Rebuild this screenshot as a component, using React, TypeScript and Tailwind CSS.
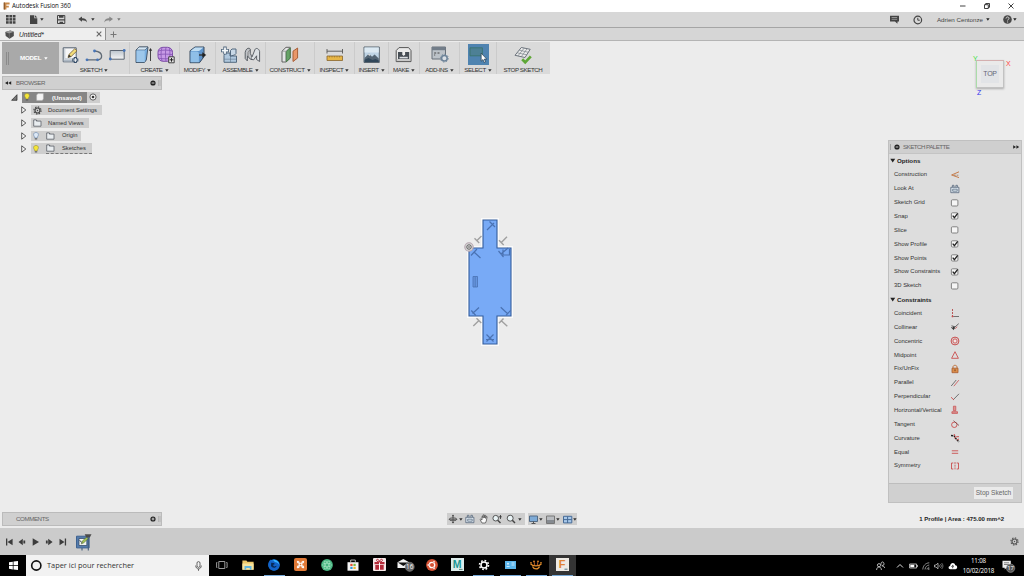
import type { ReactNode } from "react";

const sans = "font-['Liberation_Sans',Arial,sans-serif]";
const ui = "font-['Open_Sans','Noto_Sans',sans-serif]";

type IconProps = { w: number; h: number; children: ReactNode; className?: string };
function Icon({ w, h, children, className = "" }: IconProps) {
  return (
    <svg width={w} height={h} viewBox={`0 0 ${w} ${h}`} fill="none" className={`shrink-0 overflow-visible ${className}`}>
      {children}
    </svg>
  );
}

function Caret({ className = "text-[#333]" }: { className?: string }) {
  return (
    <Icon w={4} h={3} className={className}>
      <path d="M0.2 0.2h3.4L1.9 2.7z" fill="currentColor" />
    </Icon>
  );
}

/* ---------- window chrome ---------- */

function TitleBar() {
  return (
    <div className="flex h-3 shrink-0 items-center bg-white pl-[3px]">
      <Icon w={7} h={8}>
        <path d="M1 0.5h5.6v2H3.4v1.3h2.4v1.7H3.4v2H1z" fill="#c98a4b" />
        <path d="M0.6 0.5h1.3v7H0.6z" fill="#8d5a2b" />
      </Icon>
      <span className={`${ui} ml-[2px] flex-1 whitespace-nowrap text-[6.2px] leading-3 tracking-[-0.06px] text-[#111]`}>Autodesk Fusion 360</span>
      <div className="flex items-center gap-[18px] pr-[10px] text-[#111]">
        <Icon w={6} h={6}><path d="M0 3h5.5" stroke="currentColor" strokeWidth="0.8" /></Icon>
        <Icon w={6} h={6}>
          <path d="M0.5 1.7h3.8v3.8H0.5zM1.7 1.7V0.5h3.8v3.8H4.3" stroke="currentColor" strokeWidth="0.8" />
        </Icon>
        <Icon w={6} h={6}><path d="M0.5 0.5l5 5M5.5 0.5l-5 5" stroke="currentColor" strokeWidth="0.8" /></Icon>
      </div>
    </div>
  );
}

function QuickBar() {
  return (
    <div className="flex h-[16px] shrink-0 items-center border-b border-[#a5a5a5] bg-[#d7d7d7] pl-[6px] text-[#444]">
      <Icon w={10} h={9}>
        {[0, 3.4, 6.8].map((x) => [0, 3.1, 6.2].map((y) => <rect key={`${x}-${y}`} x={x} y={y} width="2.7" height="2.5" fill="#444" />))}
      </Icon>
      <Icon w={8} h={9} className="ml-[14px]">
        <path d="M0 0.3h4.3v3h3V9H0z" fill="#444" /><path d="M5 0.3l2.3 2.3H5z" fill="#444" />
      </Icon>
      <Caret className="ml-[2px] text-[#333]" />
      <Icon w={9} h={9} className="ml-[13px]">
        <path d="M0.5 0.5h7.3v8H0.5z" stroke="#444" /><path d="M2 0.5h4.5v2.2H2zM1 4.3h7v1.2H1zM2.5 6.8h3.6v2H2.5z" fill="#444" />
      </Icon>
      <Icon w={10} h={8} className="ml-[12px]">
        <path d="M0.3 3L4 0.4v1.8c3 0 4.8 1 5 4.4C8.2 5 6.8 4.3 4 4.3v1.5z" fill="#444" />
      </Icon>
      <Caret className="ml-[3px] text-[#333]" />
      <Icon w={10} h={8} className="ml-[9px]">
        <path d="M9 3L5.3 0.4v1.8C2.4 2.2 0.6 3.2 0.3 6.6 1.2 5 2.6 4.3 5.3 4.3v1.5z" fill="#888" />
      </Icon>
      <Caret className="ml-[3px] text-[#777]" />
      <div className="flex-1" />
      <Icon w={9} h={9} className="mr-[2px]">
        <path d="M0 0.8h9v5.6H7.6L7.4 8.8 5 6.4H0z" fill="#444" />
        <path d="M1.6 2.5h5.6M1.6 4.3h5.6" stroke="#b5b5b5" strokeWidth="0.7" />
      </Icon>
      <Icon w={10} h={10} className="ml-[12px]">
        <circle cx="4.8" cy="5" r="3.8" stroke="#444" strokeWidth="1.2" /><path d="M4.8 2.8V5.2H6.8" stroke="#444" />
      </Icon>
      <span className={`${sans} ml-[14px] whitespace-nowrap text-[6.2px] text-[#444]`}>Adrien Centonze</span>
      <Caret className="ml-[3px] text-[#222]" />
      <Icon w={9} h={9} className="ml-[13px]">
        <circle cx="4.5" cy="4.5" r="4.3" fill="#484848" />
        <path d="M3 3.5c0-2 3-2 3-.1 0 1.1-1.4 1-1.4 2.1M4.6 6.5v1" stroke="#ddd" strokeWidth="1" />
      </Icon>
      <Caret className="ml-[1px] mr-[7px] text-[#222]" />
    </div>
  );
}

function TabBar() {
  return (
    <div className="flex h-[13px] shrink-0 border-b border-[#b4b4b4] bg-[#d6d6d6]">
      <div className="flex w-[106px] items-center border-r border-[#909090] bg-[#eeeeee] pl-[5px]">
        <Icon w={9} h={9}>
          <path d="M0.3 2L5.4 0.6 8.8 1.8V6L4.6 8.7 0.7 6z" fill="#4d4d4d" /><path d="M0.3 2L5.4 0.6 8.8 1.8 4.2 3.4z" fill="#999" />
          <path d="M4.3 3.4v5" stroke="#888" strokeWidth="0.5" />
        </Icon>
        <span className={`${sans} ml-[5px] flex-1 pt-px text-[6.6px] italic leading-3 text-[#222]`}>Untitled*</span>
        <Icon w={6} h={6} className="mr-[3px]"><path d="M0.7 0.7l4.6 4.6M5.3 0.7L0.7 5.3" stroke="#666" strokeWidth="1.1" /></Icon>
      </div>
      <Icon w={7} h={7} className="ml-[4px] mt-[3px]"><path d="M3.5 0.5v6M0.5 3.5h6" stroke="#777" strokeWidth="1" /></Icon>
    </div>
  );
}

/* ---------- toolbar ---------- */

const outline = "#394a5e";

function SketchIcon() {
  return (
    <Icon w={17} h={18}>
      <path d="M1.2 1.8h13v14h-13z" fill="#f6f6f6" stroke="#53606f" /><path d="M1.7 13.5h12v2h-12z" fill="#aeb9c5" />
      <path d="M2.8 2.8v10h10" stroke="#a5b3c2" strokeWidth=".7" />
      <path d="M6 11.5L7 8.4 12.8 2.7 15 4.8 9.1 10.6z" fill="#f4dd79" stroke="#705b30" strokeWidth=".8" />
      <path d="M6 11.5l1-3.1L9.1 10.6z" fill="#333" />
      <path d="M13.3 11v6M10.3 14h6" stroke="#354c67" strokeWidth="3" /><path d="M13.3 12v4M11.3 14h4" stroke="#fff" />
    </Icon>
  );
}
function ArcIcon() {
  return (
    <Icon w={18} h={14}>
      <path d="M2 11.8h11c3-.2 3.7-2 3.6-4-.1-3-2.1-4.2-6.6-4.8" stroke="#606a75" strokeWidth="1.3" />
      {[[2, 11.8], [12.5, 11.8], [9.5, 3]].map(([x, y]) => <circle key={x} cx={x} cy={y} r="1.4" fill="#4775b8" />)}
    </Icon>
  );
}
function RectIcon() {
  return (
    <Icon w={17} h={12}>
      <defs><linearGradient id="rg" x2="0" y2="1"><stop stopColor="#bcc5cd" /><stop offset="1" stopColor="#f5f5f5" /></linearGradient></defs>
      <path d="M1.2 1.5h14v8.7h-14z" fill="url(#rg)" stroke="#5b6470" />
      <circle cx="1.3" cy="10" r="1.4" fill="#4775b8" /><circle cx="15.2" cy="1.5" r="1.4" fill="#4775b8" />
    </Icon>
  );
}
function ExtrudeIcon() {
  return (
    <Icon w={17} h={18}>
      <path d="M1 4L4 1h9l-1.7 13L9.4 16.5H1z" fill="#79aee0" stroke={outline} strokeWidth=".9" />
      <path d="M1 4L4 1h9L10 4z" fill="#d3e6f4" stroke={outline} strokeWidth=".6" /><path d="M1.5 4.5h8.2v11.6H1.5z" fill="#9dc7eb" />
      <path d="M15.5 3v12" stroke="#333" strokeWidth=".9" /><path d="M13.8 4.7l1.7-2.6 1.7 2.6z" fill="#333" />
    </Icon>
  );
}
function FormIcon() {
  return (
    <Icon w={18} h={18}>
      <rect x="1" y="1.3" width="14.5" height="14" rx="5" fill="#c79ae6" stroke="#7d4fa8" />
      <path d="M5 1.5c-1.3 4-1.3 9 0 13.5M9 1.3c-.7 4-.7 9 0 14M12.5 2c.6 4 .6 9 0 13M1 5c4-1.2 10-1.2 14.5 0M1 8.7c4-.8 10-.8 14.5 0M1.2 12.2c4 .8 10 .8 14 0" stroke="#8353b2" strokeWidth=".8" />
      <path d="M11.7 10.8h5.5v6h-5.5z" fill="#e4e4e4" stroke="#333" strokeWidth=".9" /><path d="M14.5 12v3.7M12.7 13.8h3.7" stroke="#222" />
    </Icon>
  );
}
function ModifyIcon() {
  return (
    <Icon w={18} h={18}>
      <path d="M1 4.8L6 1h9v9.7l-4.5 6H1z" fill="#5e94cc" stroke={outline} />
      <path d="M1.5 5L6 1.5h8.5L10 5z" fill="#c0ddf2" /><path d="M1.6 5.4h5.8c2.3 0 2.5 1 2.5 3.2v7.6H1.6z" fill="#8fbfe8" />
      <path d="M10 9h4" stroke="#333" strokeWidth="1.4" /><path d="M13.3 6.3L17.3 9l-4 2.7z" fill="#222" />
    </Icon>
  );
}
function NewComponentIcon() {
  return (
    <Icon w={18} h={18}>
      <path d="M4 9.5L5.5 7H10v3h6.5v6.3H4z" fill="#b0c8de" stroke="#53697f" /><path d="M10.5 10V4.5L12 3h4v4.5L14.5 9z" fill="#c8d8e6" stroke="#53697f" />
      <path d="M4.3 13.2h6.2v3M10.5 10v3.2h5.7" stroke="#53697f" strokeWidth=".5" />
      <path d="M5 .6v8M1 4.6h8" stroke="#53697f" strokeWidth="3.4" /><path d="M5 1.5v6.2M1.9 4.6h6.2" stroke="#f5f9fc" strokeWidth="1.8" />
    </Icon>
  );
}
function JointIcon() {
  return (
    <Icon w={17} h={18}>
      <path d="M1.2 12.5V6.3C1.8 2.5 5 1 6.3 3.2v4.2L8 11v2.7l-2-.8-2.5-3-.2 5z" fill="#c0c3c7" stroke="#50565c" strokeWidth=".9" />
      <path d="M8 11l3-7.5c1-2 4-1 4.6 2v10l-3-2V9.8L9.7 13.8 8 13.5" fill="#dce0e4" stroke="#50565c" strokeWidth=".9" />
      <path d="M6 3.6L4 6.5v4" stroke="#777" strokeWidth=".8" />
    </Icon>
  );
}
function ConstructIcon() {
  return (
    <Icon w={18} h={18}>
      <path d="M1 5.2L5 1.3h4.2V12L5 16H1z" fill="#e4e5e6" stroke="#555" strokeWidth=".9" /><path d="M1.3 5.2h3.5V16M4.8 5.2L9 1.4" stroke="#888" strokeWidth=".7" />
      <path d="M5.3 5.7L9.2 2v10.2l-3.9 3.6z" fill="#66a266" stroke="#3d7440" strokeWidth=".8" />
      <path d="M12 5.2L16.6 2v10L12 15.5z" fill="#e99768" stroke="#a95e37" />
    </Icon>
  );
}
function InspectIcon() {
  return (
    <Icon w={18} h={14}>
      <path d="M1 1v4.5M16.5 1v4.5M1 3.2h15.5" stroke="#555" strokeWidth=".9" />
      <path d="M1 8h15.5v4.5H1z" fill="#e7b646" stroke="#89662d" strokeWidth=".8" /><path d="M3.5 8v1.5M6 8v1.5M8.5 8v1.5M11 8v1.5M13.5 8v1.5" stroke="#89662d" strokeWidth=".5" />
    </Icon>
  );
}
function InsertIcon() {
  return (
    <Icon w={18} h={18}>
      <path d="M1 1h15.3v15.5H1z" fill="#bfd4e5" stroke="#5b6670" />
      <path d="M1.5 1.5h14.3v5H1.5z" fill="#dce9f2" /><path d="M1.5 12L6 7.5l3 3.2 2.6-2.2 4.2 4V16H1.5z" fill="#536473" />
      <path d="M1.5 13.8l4-1.8 4 2 3-1 3.3 1.5V16H1.5z" fill="#31475a" /><path d="M5 8.7l1-1.2 1.5 1.7-1 .5z" fill="#eee" />
    </Icon>
  );
}
function MakeIcon() {
  return (
    <Icon w={18} h={18}>
      <path d="M1.2 4.6L4 1.6h9.6L16 4.6v11H1.2z" fill="#e9e9e9" stroke="#555" />
      <path d="M3 6h11.2v7H3z" fill="#454c53" /><path d="M7.3 5.5h2.8v3L8.7 10 7.3 8.5z" fill="#eee" />
      <path d="M4.5 10.8h8.3v1.6H4.5z" fill="#d9dde1" /><path d="M1.5 14h14" stroke="#aaa" />
    </Icon>
  );
}
function AddInsIcon() {
  return (
    <Icon w={18} h={17}>
      <path d="M1 1h13.5v12H1z" fill="#bcc2c8" stroke="#69717a" /><path d="M1 1h13.5v3.2H1z" fill="#727d89" />
      <path d="M3.2 7h2M6.5 7h2M3.2 9h1" stroke="#444" />
      <circle cx="13.4" cy="12.2" r="2.8" fill="#d9dfe5" stroke="#6c8399" strokeWidth="1.5" />
      <circle cx="13.4" cy="12.2" r="3.9" stroke="#6c8399" strokeWidth=".9" strokeDasharray="1.5 1.5" />
    </Icon>
  );
}
function SelectIcon() {
  return (
    <Icon w={21} h={21}>
      <path d="M0 0h21v21H0z" fill="#4f83b0" /><path d="M2 3.8h12.4v8H2z" fill="#4d8095" stroke="#377168" strokeWidth=".8" />
      <path d="M13.2 9.2v8l1.8-1.7 1.2 3 1.3-.6-1.2-2.8h2.4z" fill="#fff" stroke="#182b3d" strokeWidth=".6" />
    </Icon>
  );
}
function StopSketchIcon() {
  return (
    <Icon w={18} h={18}>
      <path d="M1 9.3L7.3 1.5l8.9 1.8L11 11.5z" fill="#ececec" stroke="#606872" strokeWidth=".9" />
      <path d="M3.1 6.8l9.8 2M5.2 4.1l9.2 2.2M3.8 10L10.3 2M7.3 10.7l5.8-8" stroke="#7a828a" strokeWidth=".7" />
      <path d="M8.2 13.3l3 3 5.6-6" stroke="#5ea736" strokeWidth="2.7" />
    </Icon>
  );
}

type Group = { label: string; width: string; gap?: string; caret?: boolean; icons: ReactNode };
const groups: Group[] = [
  { label: "SKETCH", width: "w-[71px]", gap: "gap-[6px]", icons: <><SketchIcon /><ArcIcon /><RectIcon /></> },
  { label: "CREATE", width: "w-[50px]", gap: "gap-[5px]", icons: <><ExtrudeIcon /><FormIcon /></> },
  { label: "MODIFY", width: "w-[36px]", icons: <ModifyIcon /> },
  { label: "ASSEMBLE", width: "w-[50px]", gap: "gap-[6px]", icons: <><NewComponentIcon /><JointIcon /></> },
  { label: "CONSTRUCT", width: "w-[49px]", icons: <ConstructIcon /> },
  { label: "INSPECT", width: "w-[40px]", icons: <InspectIcon /> },
  { label: "INSERT", width: "w-[34px]", icons: <InsertIcon /> },
  { label: "MAKE", width: "w-[31px]", icons: <MakeIcon /> },
  { label: "ADD-INS", width: "w-[40px]", icons: <AddInsIcon /> },
  { label: "SELECT", width: "w-[37px]", icons: <SelectIcon /> },
  { label: "STOP SKETCH", width: "w-[53px]", caret: false, icons: <StopSketchIcon /> },
];

function Toolbar() {
  return (
    <div className="ml-[2px] mt-px flex h-[32px] w-[548px] shrink-0 bg-[#dadada]">
      <div className="flex w-[57px] shrink-0 items-center bg-[#a9a9a9] pl-[4px]">
        <div className="h-[13px] w-[3px] border-x border-[#8b8b8b]" />
        <span className={`${sans} ml-[11px] text-[6.2px] font-bold tracking-[-0.2px] text-white`}>MODEL</span>
        <Caret className="ml-[3px] text-white" />
      </div>
      {groups.map((g, i) => (
        <div key={g.label} className={`flex shrink-0 flex-col border-r ${i < 10 ? "border-[#cbcbcb]" : "border-transparent"} ${g.width}`}>
          <div className={`flex h-[25px] items-center justify-center ${g.gap ?? ""}`}>{g.icons}</div>
          <div className="flex h-[6px] items-center justify-center gap-[1px]">
            <span className={`${sans} whitespace-nowrap text-[6.2px] leading-[6px] tracking-[-0.42px] text-[#333]`}>{g.label}</span>
            {g.caret !== false && <Caret className="ml-px text-[#333]" />}
          </div>
        </div>
      ))}
    </div>
  );
}

/* ---------- browser ---------- */

function PanelBar({ title, collapse, plus }: { title: string; collapse?: boolean; plus?: boolean }) {
  return (
    <div className="flex h-[14px] w-[160px] shrink-0 items-center border border-[#bbb] bg-[#d0d0d0] pl-[2px]">
      <div className="flex w-[11px]">
        {collapse && <Icon w={7} h={4}><path d="M3 0.2v3.6L0 2zM6.2 0.2v3.6L3.2 2z" fill="#222" /></Icon>}
      </div>
      <span className={`${sans} flex-1 text-[6.2px] tracking-[-0.42px] text-[#666]`}>{title}</span>
      <Icon w={6} h={6}>
        <circle cx="3" cy="3" r="2.6" fill="#222" />
        <path d={plus ? "M3 1.6v2.8M1.6 3h2.8" : "M1.6 3h2.8"} stroke="#ddd" strokeWidth=".9" />
      </Icon>
      <Icon w={3} h={8} className="ml-[2px]"><path d="M.5 1v6M2 1v6" stroke="#aaa" strokeWidth=".7" /></Icon>
    </div>
  );
}

const Bulb = ({ on }: { on: boolean }) => (
  <Icon w={6} h={8}>
    <path d="M3 .5C.2.5 0 3.3 1.7 5v1h2.6V5C6 3.3 5.8.5 3 .5z" fill={on ? "#f5e638" : "#dce8f6"} stroke={on ? "#938c3a" : "#6483ab"} strokeWidth=".6" />
    <path d="M1.8 6.9h2.4" stroke="#555" strokeWidth="1.1" />
  </Icon>
);
const Folder = () => (
  <Icon w={9} h={8}><path d="M.7 7.2V.9h2.7l.8 1.2H8v5.1zM3.5 1v1.4" fill="#e9edf0" stroke="#5a6067" strokeWidth=".8" /></Icon>
);
const Gear = ({ color = "#444" }: { color?: string }) => (
  <Icon w={9} h={9}>
    <circle cx="4.5" cy="4.5" r="2.5" stroke={color} strokeWidth="1.2" />
    <circle cx="4.5" cy="4.5" r="3.6" stroke={color} strokeWidth="1.1" strokeDasharray="1.45 1.37" />
    <circle cx="4.5" cy="4.5" r=".7" fill={color} />
  </Icon>
);

function TreeRow({ width, children }: { width: string; children: ReactNode }) {
  return (
    <div className="flex h-[12.8px] items-center pl-[19px]">
      <Icon w={6} h={8} className="mr-[4px]"><path d="M.7.8L4.8 4 .7 7.2z" fill="#f4f4f4" stroke="#333" strokeWidth=".8" /></Icon>
      <div className={`${sans} flex h-[10.5px] items-center bg-[#cecece] pl-[2px] text-[5.8px] text-[#333] ${width}`}>{children}</div>
    </div>
  );
}

function Browser() {
  return (
    <div className="flex flex-col">
      <PanelBar title="BROWSER" collapse />
      <div className="mt-px flex h-[12.8px] items-center pl-[9px]">
        <Icon w={7} h={7} className="mr-[4px]"><path d="M6 .7v5.6H.6z" fill="#777" stroke="#222" strokeWidth=".7" /></Icon>
        <div className="flex h-[10.5px] w-[65px] items-center bg-[#868686] pl-[2px]">
          <Bulb on />
          <Icon w={8} h={8} className="ml-[6px]"><path d="M.6 2L2 .6h5.4V6L6.2 7.4H.6z" fill="#f4f4f4" stroke="#aaa" strokeWidth=".5" /></Icon>
          <span className={`${sans} ml-[8px] text-[6.2px] font-bold text-white`}>(Unsaved)</span>
        </div>
        <div className="flex h-[10.5px] w-[13px] items-center bg-[#cecece] pl-[2px]">
          <Icon w={8} h={8}><circle cx="4" cy="4" r="3.1" fill="#f5f5f5" stroke="#444" strokeWidth=".8" /><circle cx="4" cy="4" r="1.3" fill="#333" /></Icon>
        </div>
      </div>
      <TreeRow width="w-[71px]"><Gear /><span className="ml-[6px] whitespace-nowrap">Document Settings</span></TreeRow>
      <TreeRow width="w-[58px]"><Folder /><span className="ml-[6px] whitespace-nowrap">Named Views</span></TreeRow>
      <TreeRow width="w-[50px]"><Bulb on={false} /><div className="ml-[7px]"><Folder /></div><span className="ml-[7px]">Origin</span></TreeRow>
      <TreeRow width="w-[61px]">
        <Bulb on />
        <div className="ml-[7px] flex h-full flex-1 items-center border-b border-dashed border-[#777]"><Folder /><span className="ml-[7px]">Sketches</span></div>
      </TreeRow>
    </div>
  );
}

/* ---------- canvas ---------- */

const profile = "M23 8H37V36H51V104H37V132H23V104H9V36H23Z";

function Profile() {
  return (
    <Icon w={60} h={140} className="absolute left-[460px] top-[171px]">
      <path d={profile} stroke="#fafafa" strokeWidth="4" />
      <path d={profile} fill="#78aaf6" stroke="#335c9c" strokeWidth="1.1" />
      <g stroke="#4a72b2" strokeWidth="1.2">
        <path d="M27 18l7-7M29.5 9.5l5.5 5.5" />
        <path d="M14 40l6.5 6M11 43.5l6-6.5" />
        <path d="M38.5 39l5 6M41 42l7-6M43 37.5v5.5h6.5v-6" />
        <path d="M12.5 101.5l6.5-6M11.3 98.5l4.5 5" />
        <path d="M40.7 95.3l7.3 6.7M46 103.3l4.7-5" />
        <path d="M26.5 129.5l7-7M26.5 122.5l7 7M26 127.5h8" />
        <path d="M13 64.5h4.5v10.5H13z" fill="#6695df" strokeWidth=".8" /><path d="M15.2 65v10" strokeWidth=".7" />
      </g>
      <g stroke="#a0a0a0" strokeWidth="1.4">
        <path d="M16.5 29l5-5M14.5 26.2l4.7 4.7" />
        <path d="M41.3 30.5l5.7-5.7M39 28.2l4.7 4.7" />
        <path d="M13.3 114l5.4-5.3M16.5 106.3l4.8 4.8" />
        <path d="M41.3 108.7l6 5.6M39 111.3l4.5-4.8" />
      </g>
      <circle cx="9" cy="35" r="4.2" fill="#d6d6d6" stroke="#b6a5af" strokeWidth="1.1" />
      <circle cx="9" cy="35" r="2.2" fill="#f5f5f5" stroke="#555" strokeWidth="1" /><circle cx="9" cy="35" r=".8" fill="#333" />
    </Icon>
  );
}

function ViewCube() {
  return (
    <div className={`${sans} relative ml-[88px] mt-[20px] flex h-[28px] w-[28px] items-center justify-center border border-[#c2c2c2] bg-[#eaeaea] shadow-[0_1px_2px_#aaa]`}>
      <div className="flex h-[18px] w-[18px] items-center justify-center bg-[#e2e4e7] text-[7px] tracking-[-0.3px] text-[#667]">TOP</div>
      <span className="absolute -left-[4px] -top-[6px] text-[7px] leading-[7px] text-[#3ee03e]">Y</span>
      <span className="absolute left-[29px] -top-px text-[7px] leading-[7px] text-[#ff4545]">X</span>
      <span className="absolute left-0 top-[28px] text-[7px] leading-[7px] text-[#3333ee]">Z</span>
      <span className="absolute -left-px -top-px h-[28px] w-px bg-[#abdca9]" />
      <span className="absolute -left-px -top-px h-px w-[28px] bg-[#d4afaf]" />
    </div>
  );
}

/* ---------- sketch palette ---------- */

const LookAt = () => (
  <Icon w={10} h={10}><path d="M.8 3.3h8.1v5.4H.8zM2.4 3V1.3h1.5V3m2-.1V1.3h1.5V3" fill="#dce6ef" stroke="#556578" strokeWidth=".8" /><path d="M2.7 5.2h4.5v2H2.7z" stroke="#556578" strokeWidth=".7" /></Icon>
);
const Check = ({ on }: { on: boolean }) => (
  <Icon w={10} h={10}>
    <rect x="1.4" y="1.8" width="6.5" height="6.2" rx="1" fill="#f5f5f5" stroke="#777" strokeWidth=".9" />
    {on && <path d="M2.7 4.6l1.7 2L7.7 2.3" stroke="#222" strokeWidth="1.3" />}
  </Icon>
);
const red = "#c94d4d";
const options: [string, ReactNode][] = [
  ["Construction", <Icon w={10} h={10}><path d="M9 1.8L1.6 5 9 7.6" stroke="#c67b48" strokeWidth="1" /><path d="M4 5.2h5" stroke="#9b7458" strokeWidth=".8" strokeDasharray="1.8 .8" /></Icon>],
  ["Look At", <LookAt />],
  ["Sketch Grid", <Check on={false} />],
  ["Snap", <Check on />],
  ["Slice", <Check on={false} />],
  ["Show Profile", <Check on />],
  ["Show Points", <Check on />],
  ["Show Constraints", <Check on />],
  ["3D Sketch", <Check on={false} />],
];
const constraints: [string, ReactNode][] = [
  ["Coincident", <Icon w={10} h={10}><path d="M2.5 1v7.5" stroke="#b34747" strokeWidth=".9" strokeDasharray="2 1" /><path d="M3.2 8.5H9" stroke="#666" strokeWidth=".9" /><circle cx="2.5" cy="8.4" r=".9" fill={red} /></Icon>],
  ["Collinear", <Icon w={10} h={10}><path d="M1 5.2L4 8M4.6 5.4L8.7 1.7M1.5 3.8l3.5 1" stroke="#555" strokeWidth=".9" /><circle cx="3.6" cy="6" r="1.2" fill="#333" /><path d="M5.2 6.6l2-1.8" stroke={red} strokeWidth=".8" /></Icon>],
  ["Concentric", <Icon w={10} h={10}><circle cx="5" cy="5" r="3.9" stroke={red} strokeWidth="1" /><circle cx="5" cy="5" r="2.1" fill="#f3e5e5" stroke={red} strokeWidth=".9" /></Icon>],
  ["Midpoint", <Icon w={10} h={10}><path d="M5 1.7l3.4 6.6H1.6z" stroke={red} strokeWidth=".9" /></Icon>],
  ["Fix/UnFix", <Icon w={10} h={10}><path d="M3 4.3V2.8C3.2.8 6.7.8 7 2.8v1.5" stroke="#bf713a" /><path d="M2 4.2h6v4.5H2z" fill="#dc8f4c" stroke="#a65b2f" strokeWidth=".8" /><path d="M5 5.4v1.8" stroke="#76401e" /></Icon>],
  ["Parallel", <Icon w={10} h={10}><path d="M1.2 8l5-6" stroke="#555" strokeWidth=".8" /><path d="M3.8 8.2l5-6" stroke={red} strokeWidth=".8" /></Icon>],
  ["Perpendicular", <Icon w={10} h={10}><path d="M3 8l6-6.2" stroke="#555" strokeWidth=".8" /><path d="M1 5.2l3 2.8" stroke={red} strokeWidth=".9" /></Icon>],
  ["Horizontal/Vertical", <Icon w={10} h={10}><path d="M3.4 1.2h2.4v4.5H3.4zM1.9 6.7h5.6v1.7H1.9z" fill="#d99494" stroke={red} strokeWidth=".7" /></Icon>],
  ["Tangent", <Icon w={10} h={10}><circle cx="4.3" cy="5.8" r="2.7" stroke={red} strokeWidth=".9" /><path d="M3.5 1.7l5.5 4.8" stroke="#744" strokeWidth=".8" /></Icon>],
  ["Curvature", <Icon w={10} h={10}><path d="M1 2.5l3 .3 2 3L9 9" stroke="#222" strokeWidth="1.4" strokeDasharray="2 .7" /><path d="M4 1l1 2M4.2 5l2.5-1.3h2.3M6.8 7l2.2-1" stroke={red} strokeWidth="1" /></Icon>],
  ["Equal", <Icon w={10} h={10}><path d="M1.8 3.8h6.4M1.8 6.3h6.4" stroke={red} strokeWidth=".9" /></Icon>],
  ["Symmetry", <Icon w={10} h={10}><path d="M3.3 2H1.5v6h1.8M6.7 2h1.8v6H6.7" stroke={red} strokeWidth=".9" /><path d="M5 1v8" stroke={red} strokeWidth=".8" strokeDasharray="2 .7" /></Icon>],
];

function Section({ title, rows }: { title: string; rows: [string, ReactNode][] }) {
  return (
    <>
      <div className="flex h-[13.87px] items-center pl-[1px] text-[6.2px] font-bold text-[#222]">
        <Icon w={6} h={5} className="mr-px"><path d="M.3.7h4.9L2.7 4.5z" fill="#222" /></Icon>{title}
      </div>
      {rows.map(([label, icon]) => (
        <div key={label} className="flex h-[13.87px] items-center pl-[5px]">
          <span className="w-[56px] whitespace-nowrap text-[5.9px] text-[#333]">{label}</span>{icon}
        </div>
      ))}
    </>
  );
}

function Palette() {
  return (
    <div className={`${sans} mt-[52px] flex h-[363px] w-[134px] shrink-0 flex-col border border-[#c0c0c0] bg-[#dddddd]`}>
      <div className="flex h-[13px] shrink-0 items-center border-b border-[#c4c4c4] bg-[#cfcfcf]">
        <Icon w={4} h={8}><path d="M1.5 1v6" stroke="#999" strokeWidth=".8" /></Icon>
        <Icon w={6} h={6} className="ml-px"><circle cx="3" cy="3" r="2.6" fill="#222" /><path d="M1.7 3h2.6" stroke="#ddd" strokeWidth=".9" /></Icon>
        <span className="ml-[3px] flex-1 text-[6.2px] tracking-[-0.54px] text-[#666]">SKETCH PALETTE</span>
        <Icon w={7} h={4} className="mr-px"><path d="M.2.2v3.6L3 2zM3.4.2v3.6L6.2 2z" fill="#222" /></Icon>
      </div>
      <div className="flex-1">
        <Section title="Options" rows={options} />
        <Section title="Constraints" rows={constraints} />
      </div>
      <div className="flex h-[19px] shrink-0 items-center justify-end border-t border-[#bdbdbd] bg-[#d0d0d0] pr-[8px]">
        <button className="flex h-[12px] w-[39px] items-center justify-center whitespace-nowrap bg-[#eaeaea] text-[6.6px] text-[#666]">Stop Sketch</button>
      </div>
    </div>
  );
}

/* ---------- navigation bar ---------- */

function NavBar() {
  return (
    <div className="mb-[3px] ml-[285px] flex h-[12px] gap-[3px]">
      <div className="flex w-[78px] items-center bg-[#cecece] pl-[1px]">
        <Icon w={10} h={10}><path d="M5 1v8M1 5.3h8" stroke="#444" strokeWidth=".8" /><ellipse cx="5" cy="5.3" rx="3.8" ry="1.5" stroke="#444" strokeWidth=".8" /><path d="M3.8 2.2L5 .6l1.2 1.6zM3.8 8L5 9.6 6.2 8z" fill="#444" /></Icon>
        <Caret className="ml-px text-[#333]" />
        <div className="ml-[2px]"><LookAt /></div>
        <Icon w={10} h={10} className="ml-[4px]"><path d="M3 9L1 5.5l.7-.4L3 6V2.3l.8-.2.3 2V.9l1-.1.2 3.1.5-2.7.9.2-.1 3 .7-2 .8.3L7.3 7 6.4 9z" fill="#fafafa" stroke="#444" strokeWidth=".7" /></Icon>
        <Icon w={10} h={10} className="ml-[3px]"><circle cx="3.7" cy="4.2" r="2.8" fill="#e9f3f5" stroke="#555" /><path d="M5.7 6.3L8.5 9" stroke="#444" strokeWidth="1.4" /><path d="M8.5 1v4M6.8 2.8h3" stroke="#333" strokeWidth=".8" /></Icon>
        <Icon w={10} h={10} className="ml-[4px]"><circle cx="4.2" cy="4.2" r="3" fill="#e9f3f5" stroke="#555" /><path d="M6.3 6.3L9 9" stroke="#444" strokeWidth="1.5" /></Icon>
        <Caret className="ml-[2px] text-[#333]" />
      </div>
      <div className="flex w-[49px] items-center bg-[#cecece] pl-[1px]">
        <Icon w={9} h={9}><path d="M.5 1h8v5.5h-8z" fill="#7eabd7" stroke="#526b86" /><path d="M4.5 6.5v2M2.5 8.5h4" stroke="#555" /></Icon>
        <Caret className="ml-[1px] text-[#333]" />
        <Icon w={9} h={9} className="ml-[3px]"><path d="M.5 1h8v7.5h-8z" fill="#b9bcc0" stroke="#777" /><path d="M1 5h7v3H1z" fill="#858a90" /></Icon>
        <Caret className="ml-[1px] text-[#333]" />
        <Icon w={9} h={9} className="ml-[3px]"><path d="M.5 1.3h8.3v6.6H.5z" fill="#a8c8e9" stroke="#466b97" /><path d="M4.6 1.5V8M.5 4.6h8.3" stroke="#466b97" /></Icon>
        <Caret className="ml-[1px] text-[#333]" />
      </div>
    </div>
  );
}

/* ---------- bottom bars ---------- */

function Timeline() {
  return (
    <div className="flex h-[27px] shrink-0 items-center bg-[#cbcbcb] pl-[5px] pr-[5px] text-[#3c3c3c]">
      <Icon w={8} h={8}><path d="M1 .5h1.3v7H1zM7.6.7v6.6L2.5 4z" fill="currentColor" /></Icon>
      <Icon w={8} h={8} className="ml-[5px]"><path d="M4.8.8v6.4L.5 4zM5.4 2.5h1.8v3H5.4z" fill="currentColor" /></Icon>
      <Icon w={8} h={8} className="ml-[6px]"><path d="M.7.2v7.6L7 4z" fill="currentColor" /></Icon>
      <Icon w={8} h={8} className="ml-[5px]"><path d="M3.2.8v6.4L7.6 4zM.9 2.5h1.8v3H.9z" fill="currentColor" /></Icon>
      <Icon w={8} h={8} className="ml-[6px]"><path d="M.5.7v6.6L5.5 4zM5.8.5h1.3v7H5.8z" fill="currentColor" /></Icon>
      <Icon w={18} h={18} className="ml-[8px]">
        <path d="M1.5 3.2h12.6v11.7H1.5z" fill="#557cad" stroke="#3d6290" /><path d="M4 5.5h7.8v7H4z" fill="#f0f3ed" stroke="#294060" strokeWidth=".7" />
        <path d="M6.3 11l1-3 4.5-4 1.5 1.5-4.5 4.3z" fill="#a3c455" stroke="#495b32" strokeWidth=".5" />
        <path d="M4.6 7.2l2.2 2.4" stroke="#345" /><path d="M9.7 1.2h6.8l-1.7 3.3h-3.5z" fill="#4b4b4b" /><path d="M13.3 4v13.5M7 15v2.4" stroke="#465f7c" strokeWidth="1.1" />
      </Icon>
      <div className="flex-1" />
      <Gear color="#555" />
    </div>
  );
}

const apps: { name: string; open?: boolean; active?: boolean; icon: ReactNode }[] = [
  { name: "tasks", icon: <Icon w={12} h={12}><path d="M2.8 2.5h6v7h-6zM1.3 3.5H.6v5h.7M10.3 3.5h.8v5h-.8" stroke="#aaa" strokeWidth=".9" /></Icon> },
  { name: "files", icon: <Icon w={12} h={12}><path d="M.4 1.5h4l1 1.2h6.2v8H.4z" fill="#edc86a" /><path d="M.4 4.5h11.2v6.2H.4z" fill="#f7e49e" /><path d="M2.5 7h7v3.7h-1.7V9H4.2v1.7H2.5z" fill="#64b7df" /></Icon> },
  { name: "firefox", open: true, icon: <Icon w={12} h={12}><circle cx="6" cy="6" r="5.8" fill="#1777dc" /><path d="M.5 4.5C.8 2 2 1 3 .5l.3 2C6.4 1 9.7 2.5 11 5.3c.9 4-2 6.4-5.3 6.2C2 11.2 0 8.2.5 4.5z" fill="#1263c9" /><path d="M3.2 3.7l2.5.2 1.3 1-2.2 1.2 1.4 1.4 2.4-.8C8 9.4 4.3 9.5 3 7.1z" fill="#082a57" /><path d="M5 .7C8.5.5 11 3 11.4 6 10 3.8 8.5 3 6.8 3z" fill="#36b6ff" /></Icon> },
  { name: "xampp", icon: <Icon w={13} h={13}><rect width="13" height="13" rx="2" fill="#e17936" /><path d="M5.2 5.2C3 5.2 3 3.2 4 3.2s1.2.6 1.2 2h2.6c0-1.4.2-2 1.2-2s1 2-1.2 2v2.6c2.2 0 2.2 2 1.2 2s-1.2-.6-1.2-2H5.2c0 1.4-.2 2-1.2 2s-1-2 1.2-2z" stroke="#fff" strokeWidth="1.1" /></Icon> },
  { name: "atom", icon: <Icon w={12} h={12}><circle cx="6" cy="6" r="5.9" fill="#48b581" /><g stroke="#b9ebcf" strokeWidth=".5"><ellipse cx="6" cy="6" rx="4.6" ry="1.8" /><ellipse cx="6" cy="6" rx="4.6" ry="1.8" transform="rotate(60 6 6)" /><ellipse cx="6" cy="6" rx="4.6" ry="1.8" transform="rotate(120 6 6)" /></g></Icon> },
  { name: "store", icon: <Icon w={12} h={12}><path d="M.5 3.2h11v8.5H.5z" fill="#f5f5f5" /><path d="M3.7 3V1h4.6v2" stroke="#ddd" strokeWidth=".8" /><path d="M3.3 4.8h2.3V7H3.3z" fill="#e65232" /><path d="M6.4 4.8h2.3V7H6.4z" fill="#79b943" /><path d="M3.3 7.8h2.3V10H3.3z" fill="#329dda" /><path d="M6.4 7.8h2.3V10H6.4z" fill="#efb931" /></Icon> },
  { name: "gift", icon: <Icon w={13} h={13}><rect width="13" height="13" rx="1" fill="#f6e9e9" /><path d="M1.5 4h10v2.2h-10zM2.3 7h8.4v4.8H2.3z" fill="#b42b3a" /><path d="M6.5 4v8" stroke="#fff" /><path d="M6.5 4C3 4 3 1.3 4.5 1.3S6.5 4 6.5 4s.5-2.7 2-2.7S10 4 6.5 4z" stroke="#b42b3a" /></Icon> },
  { name: "mail", icon: <Icon w={16} h={13}><path d="M.5 4.3L6.3 1l5.8 3.3V10H.5z" fill="#f3f3f3" /><path d="M.8 4.5h11L6.3 8z" fill="#111" /><circle cx="12.7" cy="8.8" r="4.6" fill="#666" stroke="#999" strokeWidth=".4" /><text x="12.7" y="11.1" textAnchor="middle" fontSize="6.3" fill="#fff" fontFamily="Open Sans">16</text></Icon> },
  { name: "ubuntu", icon: <Icon w={12} h={12}><circle cx="6" cy="6" r="5.9" fill="#d65234" /><circle cx="6" cy="6" r="2.7" stroke="#fff" strokeWidth="1.3" /><circle cx="2.3" cy="6" r="1.1" fill="#fff" stroke="#d65234" strokeWidth=".4" /><circle cx="8" cy="2.8" r="1.1" fill="#fff" stroke="#d65234" strokeWidth=".4" /><circle cx="8" cy="9.2" r="1.1" fill="#fff" stroke="#d65234" strokeWidth=".4" /></Icon> },
  { name: "maya", icon: <Icon w={13} h={13}><path d="M0 0h13v13H0z" fill="#dceceb" /><text x="6.2" y="9.8" textAnchor="middle" fontSize="10.5" fontWeight="bold" fill="#1c9693" fontFamily="Liberation Sans">M</text><path d="M8 11.4h3.6" stroke="#365" strokeWidth=".8" /></Icon> },
  { name: "settings", open: true, icon: <Icon w={12} h={12}><circle cx="6" cy="6" r="3" stroke="#fff" strokeWidth="1.5" /><circle cx="6" cy="6" r="4.5" stroke="#fff" strokeWidth="1.6" strokeDasharray="1.7 1.83" /></Icon> },
  { name: "panel", open: true, icon: <Icon w={13} h={12}><path d="M1 2h11v8H1z" fill="#5bb5eb" /><circle cx="4" cy="4.7" r="1" fill="#def" /><path d="M2.6 7.5h3M7.5 4h3M7.5 6h3" stroke="#e4f4ff" strokeWidth=".8" /></Icon> },
  { name: "dock", open: true, icon: <Icon w={12} h={12}><path d="M.6 4.8c1.2 1.6 2.4 2 5.4 2s4.2-.4 5.4-2M2.5 7.4c1.3 3.2 5.8 3.2 7 0" stroke="#e08c2a" strokeWidth="1.3" /><circle cx="1" cy="3.8" r=".9" fill="#e08c2a" /><circle cx="4" cy="2.3" r=".9" fill="#e08c2a" /><circle cx="8" cy="2.3" r=".9" fill="#e08c2a" /><circle cx="11" cy="3.8" r=".9" fill="#e08c2a" /><path d="M4 2.5l.8 4M8 2.5l-.8 4" stroke="#d56d2a" strokeWidth=".8" /></Icon> },
  { name: "fusion", open: true, active: true, icon: <Icon w={13} h={13}><path d="M0 0h13v13H0z" fill="#eeeae4" /><text x="6" y="10.2" textAnchor="middle" fontSize="11" fontWeight="bold" fill="#e18334" fontFamily="Liberation Sans">F</text><path d="M8.5 11.2h3" stroke="#578" strokeWidth="1" /></Icon> },
];

function Taskbar() {
  return (
    <div className={`${ui} flex h-[21px] shrink-0 bg-black text-white`}>
      <div className="flex w-[26px] items-center justify-center">
        <Icon w={9} h={9}><path d="M0 1.3l3.8-.6v3.5H0zM4.5.6L9 0v4.2H4.5zM0 4.9h3.8v3.5L0 7.8zM4.5 4.9H9V9l-4.5-.6z" fill="#fff" /></Icon>
      </div>
      <div className="flex w-[183px] items-center bg-[#f2f2f2] pl-[5px]">
        <Icon w={11} h={11}><circle cx="5.3" cy="5.5" r="4.6" stroke="#111" strokeWidth="1.6" /></Icon>
        <span className="ml-[5px] flex-1 whitespace-nowrap text-[7.4px] text-[#333]">Taper ici pour rechercher</span>
        <Icon w={7} h={10} className="mr-[7px]"><rect x="2" y=".6" width="3" height="5.8" rx="1.5" stroke="#444" strokeWidth=".8" /><path d="M.7 4.5c0 4.5 5.6 4.5 5.6 0M3.5 8v1.8" stroke="#444" strokeWidth=".8" /></Icon>
      </div>
      <div className="flex">
        {apps.map((a) => (
          <div key={a.name} className={`flex w-[26.2px] flex-col items-center px-[2.6px] ${a.active ? "bg-[#343434]" : ""}`}>
            <div className="flex flex-1 items-center">{a.icon}</div>
            <div className={`h-[1.5px] w-[21px] ${a.open ? "bg-[#76a9d8]" : ""}`} />
          </div>
        ))}
      </div>
      <div className="flex flex-1 items-center justify-end pr-[9px]">
        <Icon w={9} h={10}><circle cx="3" cy="4.2" r="1.6" stroke="#ddd" strokeWidth=".8" /><path d="M.6 9c0-4 4.8-4 4.8 0M5 3.2c-.2-3 3.2-3 3 0-.1 1.5-2 1.6-2.5.7M5.8 5c1.7-.3 2.6.6 2.8 2" stroke="#ddd" strokeWidth=".8" /></Icon>
        <Icon w={8} h={6} className="ml-[11px]"><path d="M1 4.5L4 1.5l3 3" stroke="#ddd" /></Icon>
        <Icon w={9} h={6} className="ml-[5px]"><path d="M.6 1h7v4h-7z" stroke="#ddd" strokeWidth=".8" /><path d="M1.3 1.7h4v2.6h-4zM7.8 2.2h1v1.6h-1z" fill="#fff" /></Icon>
        <Icon w={8} h={8} className="ml-[4px]"><path d="M.8 7.5C1 3.7 3.5 1 7.3.8M3 7.5C3.2 5 5 3.2 7.3 3M5 7.5c.1-1.2 1-2.2 2.3-2.3" stroke="#999" strokeWidth=".9" /><circle cx="6.8" cy="7" r=".7" fill="#ccc" /></Icon>
        <Icon w={9} h={8} className="ml-[4px]"><path d="M.5 3h1.4L4 1.2v5.6L1.9 5H.5z" stroke="#ddd" strokeWidth=".7" /><path d="M5 3c.7.7.7 1.3 0 2M6.3 2c1.4 1.2 1.4 2.8 0 4M7.6 1c1.8 2 1.8 4 0 6" stroke="#999" strokeWidth=".7" /></Icon>
        <Icon w={10} h={8} className="ml-[5px]"><path d="M2.3 7.2C.1 7.1.1 4.1 2.1 4 2.4.3 6.7.2 7.2 3.2c2.5-.1 2.7 3.9.2 4z" fill="#fff" /><path d="M4.7 6.3V3.5M3.4 4.7l1.3-1.3L6 4.7" stroke="#222" strokeWidth=".8" /></Icon>
        <div className="ml-[5px] flex w-[31px] flex-col items-center whitespace-nowrap text-[6.2px] leading-[9.5px] tracking-[-0.15px]">
          <span>11:08</span><span>10/02/2018</span>
        </div>
        <Icon w={13} h={12} className="ml-[8px]"><path d="M.5.8h8.3v7H4.5L2.7 9.5V7.8H.5z" fill="#eee" /><path d="M2 2.8h5M2 4.5h5" stroke="#555" strokeWidth=".7" /><circle cx="8.6" cy="8.2" r="4.2" fill="#555" stroke="#aaa" strokeWidth=".5" /><text x="8.6" y="10.4" textAnchor="middle" fontSize="6" fill="#fff" fontFamily="Open Sans">17</text></Icon>
      </div>
    </div>
  );
}

export default function App() {
  return (
    <div className="flex h-[576px] w-[1024px] flex-col overflow-hidden">
      <TitleBar />
      <QuickBar />
      <TabBar />
      <main className="relative flex min-h-0 flex-1 flex-col bg-[#ececec]">
        <Profile />
        <Toolbar />
        <div className="flex min-h-0 flex-1">
          <div className="ml-[2px] flex w-[160px] flex-col justify-between pb-[2px] pt-[2px]">
            <Browser />
            <PanelBar title="COMMENTS" plus />
          </div>
          <div className="flex flex-1 flex-col justify-end">
            <NavBar />
          </div>
          <div className="flex w-[136px] flex-col">
            <div className="-mt-[34px] flex h-[48px]"><ViewCube /></div>
            <Palette />
            <div className={`${sans} mt-[12px] pr-[20px] text-right text-[6px] font-bold leading-[9px] text-[#222]`}>1 Profile | Area : 475.00 mm^2</div>
          </div>
        </div>
      </main>
      <Timeline />
      <Taskbar />
    </div>
  );
}
